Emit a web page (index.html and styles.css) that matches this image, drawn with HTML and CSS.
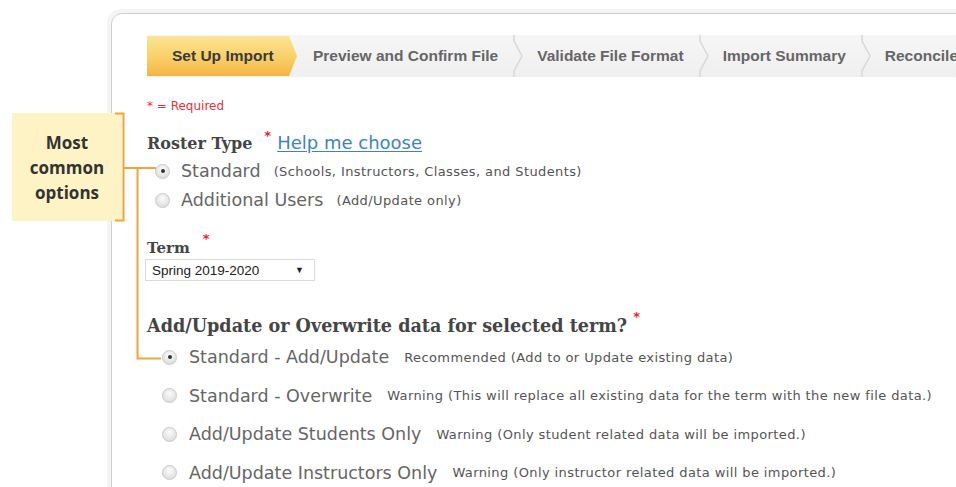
FILE: index.html
```html
<!DOCTYPE html>
<html lang="en">
<head>
<meta charset="utf-8">
<title>Set Up Import</title>
<link rel="stylesheet" href="styles.css">
</head>
<body>
<div class="page">
  <section class="panel">
    <nav class="wizard">
      <span class="step step-active">Set Up Import</span>
      <span class="step">Preview and Confirm File</span>
      <svg class="sep" viewBox="0 0 12 42" width="12" height="42"><path d="M2 0 L2 6 L10 21 L2 36 L2 42" fill="none" stroke="#d8d8d8" stroke-width="1.5"/></svg>
      <span class="step">Validate File Format</span>
      <svg class="sep" viewBox="0 0 12 42" width="12" height="42"><path d="M2 0 L2 6 L10 21 L2 36 L2 42" fill="none" stroke="#d8d8d8" stroke-width="1.5"/></svg>
      <span class="step">Import Summary</span>
      <svg class="sep" viewBox="0 0 12 42" width="12" height="42"><path d="M2 0 L2 6 L10 21 L2 36 L2 42" fill="none" stroke="#d8d8d8" stroke-width="1.5"/></svg>
      <span class="step">Reconcile</span>
    </nav>

    <p class="required">* = Required</p>

    <div class="field-head roster-head">
      <span class="label">Roster Type</span><span class="star">*</span>
      <a class="help" href="#">Help me choose</a>
    </div>
    <div class="options options-roster">
      <label class="opt"><span class="radio checked"></span><span class="opt-name">Standard</span><span class="hint">(Schools, Instructors, Classes, and Students)</span></label>
      <label class="opt"><span class="radio"></span><span class="opt-name">Additional Users</span><span class="hint">(Add/Update only)</span></label>
    </div>

    <div class="term">
      <div class="field-head term-head"><span class="label label-sm">Term</span><span class="star">*</span></div>
      <div class="select"><span>Spring 2019-2020</span><span class="caret">&#9660;</span></div>
    </div>

    <div class="field-head mode-head">
      <span class="label label-lg">Add/Update or Overwrite data for selected term?</span><span class="star">*</span>
    </div>
    <div class="options options-mode">
      <label class="opt"><span class="radio checked"></span><span class="opt-name">Standard - Add/Update</span><span class="hint">Recommended (Add to or Update existing data)</span></label>
      <label class="opt"><span class="radio"></span><span class="opt-name">Standard - Overwrite</span><span class="hint">Warning (This will replace all existing data for the term with the new file data.)</span></label>
      <label class="opt"><span class="radio"></span><span class="opt-name">Add/Update Students Only</span><span class="hint">Warning (Only student related data will be imported.)</span></label>
      <label class="opt"><span class="radio"></span><span class="opt-name">Add/Update Instructors Only</span><span class="hint">Warning (Only instructor related data will be imported.)</span></label>
    </div>
  </section>

  <aside class="callout">Most common options</aside>
  <svg class="leader" width="200" height="280" viewBox="0 100 200 280">
    <path d="M115 113.5 H123.5 V220.5 H115" fill="none" stroke="#f2a33a" stroke-width="2"/>
    <path d="M124 168 H156" fill="none" stroke="#f2a33a" stroke-width="2"/>
    <path d="M137.5 168 V358.5 H161" fill="none" stroke="#f2a33a" stroke-width="2"/>
  </svg>
</div>
</body>
</html>
```

FILE: styles.css
```css
html, body {
  margin: 0;
  padding: 0;
  background: #fff;
  overflow: hidden;
}

.page {
  position: relative;
  width: 956px;
  height: 487px;
  overflow: hidden;
  font-family: "DejaVu Sans", Verdana, sans-serif;
  color: #666;
}

/* Main form panel, runs past the right and bottom edges */
.panel {
  margin: 13px -40px 0 111px;
  height: 520px;
  border: 1px solid #cfcfcf;
  border-radius: 11px 0 0 0;
  box-shadow: -1px -1px 0 3px #f4f4f4;
  padding: 21px 0 0 35px;
  box-sizing: border-box;
}

/* Step wizard */
.wizard {
  display: flex;
  align-items: center;
  height: 42px;
  background: linear-gradient(#f6f6f6, #efefef);
  font-family: "Liberation Sans", Arial, sans-serif;
  font-weight: bold;
  font-size: 15.5px;
  color: #666;
  white-space: nowrap;
}
.step {
  padding: 0 14px 0 13px;
}
.step-active {
  display: flex;
  align-items: center;
  flex: none;
  height: 40px;
  width: 150px;
  box-sizing: border-box;
  padding: 0 0 0 25px;
  color: #3a3a3a;
  background: linear-gradient(#fbe595 0%, #f9cf66 55%, #f5b443 100%);
  clip-path: polygon(0 0, 142px 0, 150px 50%, 142px 100%, 0 100%);
}
.step-active + .step {
  padding-left: 16px;
}
.sep {
  flex: none;
}

.required {
  margin: 21px 0 0;
  font-size: 12px;
  line-height: 16px;
  color: #e8313a;
}

.field-head {
  display: flex;
  align-items: baseline;
  line-height: 22px;
  white-space: nowrap;
}
.roster-head {
  margin-top: 18px;
}
.label {
  font-family: "DejaVu Serif", Georgia, serif;
  font-weight: bold;
  font-size: 16px;
  color: #454545;
}
.label-sm {
  font-size: 15px;
}
.label-lg {
  font-size: 17.6px;
}
.star {
  color: #e8242e;
  font-size: 13px;
  font-weight: bold;
  position: relative;
  top: -9px;
  margin-left: 12px;
}
.help {
  margin-left: 6px;
  font-size: 18px;
  color: #3b85c0;
  text-decoration: underline;
  text-underline-offset: 2px;
}

.options {
  display: flex;
  flex-direction: column;
}
.opt {
  display: flex;
  align-items: center;
  white-space: nowrap;
}
.opt-name {
  font-size: 17.5px;
  color: #666;
}
.hint {
  font-size: 13px;
  letter-spacing: 0.4px;
  color: #555;
  margin-left: 13px;
}
.radio {
  flex: none;
  width: 15px;
  height: 15px;
  border-radius: 50%;
  border: 1px solid #c9c9c9;
  background: radial-gradient(circle at 50% 35%, #fbfbfb, #d6d6d6);
  box-sizing: border-box;
  margin-right: 11px;
  position: relative;
}
.radio.checked::after {
  content: "";
  position: absolute;
  left: 4.5px;
  top: 4.5px;
  width: 4px;
  height: 4px;
  border-radius: 50%;
  background: #333;
}

.options-roster {
  padding-left: 8px;
  margin-top: 0.5px;
}
.options-roster .opt {
  height: 29px;
}

.term {
  margin-top: 23.5px;
}
.term-head {
  line-height: 20px;
}
.term-head .star {
  margin-left: 13px;
  top: -10px;
}
.select {
  display: flex;
  justify-content: space-between;
  align-items: center;
  width: 170px;
  height: 22px;
  margin: 0 0 0 -2px;
  padding: 0 10px 0 6px;
  box-sizing: border-box;
  border: 1px solid #dcdcdc;
  font-family: "Liberation Sans", Arial, sans-serif;
  font-size: 13.5px;
  color: #222;
}
.caret {
  font-size: 9px;
}

.mode-head {
  margin-top: 32px;
  line-height: 26px;
}
.mode-head .star {
  margin-left: 6px;
  top: -11px;
}

.options-mode {
  padding-left: 15px;
  margin-top: -3px;
}
.options-mode .opt {
  height: 38.5px;
}
.options-mode .radio {
  margin-right: 12px;
}
.options-mode .hint {
  margin-left: 15px;
}

/* Annotation overlay */
.callout {
  position: absolute;
  left: 12px;
  top: 113px;
  width: 110px;
  height: 108px;
  box-sizing: border-box;
  padding: 17px 4px 0;
  background: #fdf3c4;
  font-family: "Open Sans", sans-serif;
  font-weight: bold;
  font-size: 17px;
  line-height: 25px;
  text-align: center;
  color: #333;
}
.leader {
  position: absolute;
  left: 0;
  top: 100px;
}
```
